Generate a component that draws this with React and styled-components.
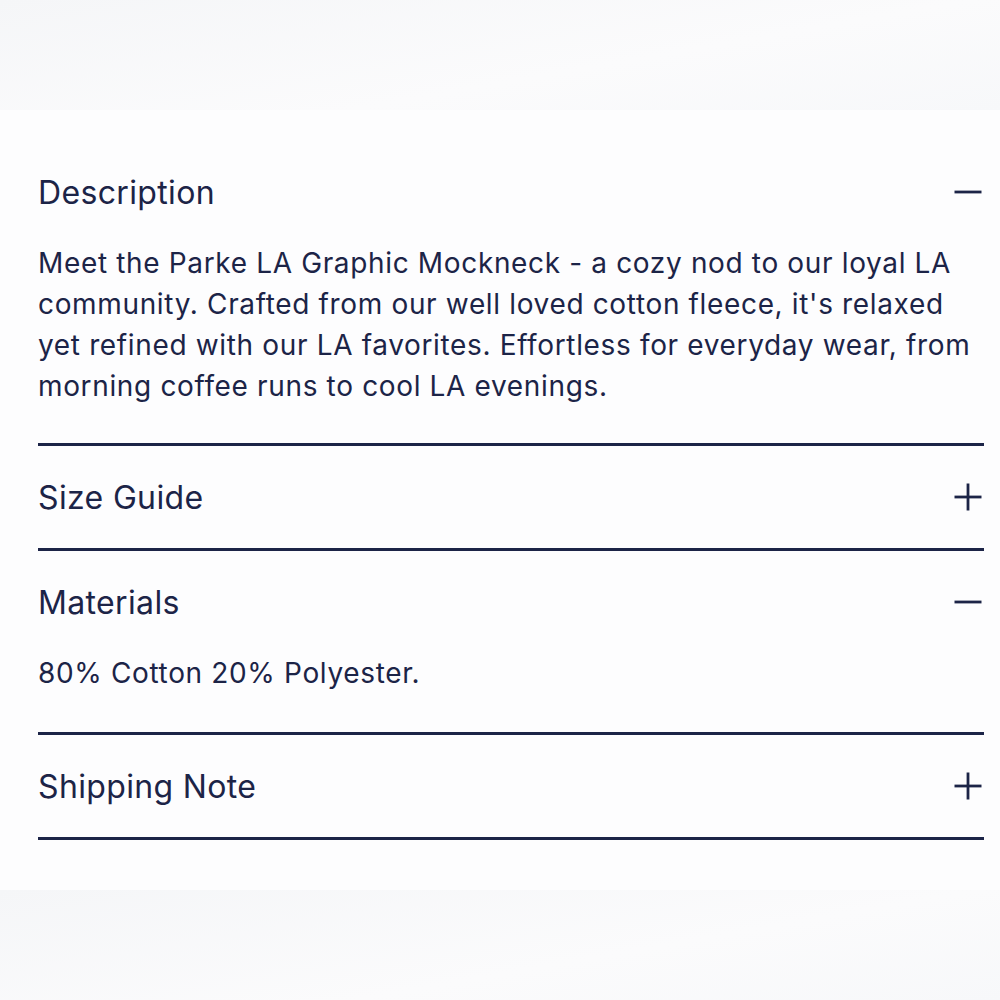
import React, { useState } from 'react';
import styled, { createGlobalStyle } from 'styled-components';

const GlobalStyle = createGlobalStyle`
  html, body {
    margin: 0;
    padding: 0;
    background: #f8f9fa;
  }
  body {
    font-family: Inter, "Noto Sans", sans-serif;
    color: #1c2447;
  }
`;

const Page = styled.div`
  display: flex;
  flex-direction: column;
  min-height: 1000px;
`;

const Band = styled.div`
  height: ${(p) => p.height}px;
  background: linear-gradient(170deg, #f5f6f8 0%, #fbfbfc 60%, #f7f8fa 100%);
`;

const Panel = styled.section`
  background: #fdfdfe;
  padding: 31px 16px 50px 38px;
`;

const Item = styled.div`
  border-bottom: 3px solid #1c2447;
`;

const Header = styled.button`
  all: unset;
  box-sizing: border-box;
  width: 100%;
  height: 102px;
  display: flex;
  align-items: center;
  justify-content: space-between;
  cursor: pointer;
`;

const Title = styled.span`
  font-size: 32px;
  font-weight: 400;
  letter-spacing: 0.35px;
  color: #1c2447;
`;

const Body = styled.p`
  margin: 0;
  padding: 0 0 ${(p) => p.bottom}px;
  font-size: 28px;
  line-height: 41px;
  letter-spacing: 0.65px;
  color: #1c2447;
`;

const IconBox = styled.svg`
  width: 30px;
  height: 30px;
  flex-shrink: 0;
  margin-right: 1px;
`;

const ToggleIcon = ({ open }) => (
  <IconBox viewBox="0 0 30 30" fill="none" stroke="#1c2447" strokeWidth="2.8">
    <line x1="1.5" y1="15" x2="28.5" y2="15" />
    {!open && <line x1="15" y1="1.5" x2="15" y2="28.5" />}
  </IconBox>
);

const sections = [
  {
    title: 'Description',
    text: "Meet the Parke LA Graphic Mockneck - a cozy nod to our loyal LA community. Crafted from our well loved cotton fleece, it's relaxed yet refined with our LA favorites. Effortless for everyday wear, from morning coffee runs to cool LA evenings.",
    open: true,
    bottom: 36,
  },
  { title: 'Size Guide', text: '', open: false, bottom: 0 },
  { title: 'Materials', text: '80% Cotton 20% Polyester.', open: true, bottom: 38 },
  { title: 'Shipping Note', text: '', open: false, bottom: 0 },
];

const App = () => {
  const [open, setOpen] = useState(sections.map((s) => s.open));

  const toggle = (i) => setOpen((prev) => prev.map((v, j) => (j === i ? !v : v)));

  return (
    <>
      <GlobalStyle />
      <Page>
        <Band height={110} />
        <Panel>
          {sections.map((s, i) => (
            <Item key={s.title}>
              <Header onClick={() => toggle(i)}>
                <Title>{s.title}</Title>
                <ToggleIcon open={open[i]} />
              </Header>
              {open[i] && s.text && <Body bottom={s.bottom}>{s.text}</Body>}
            </Item>
          ))}
        </Panel>
        <Band height={112} />
      </Page>
    </>
  );
};

export default App;
